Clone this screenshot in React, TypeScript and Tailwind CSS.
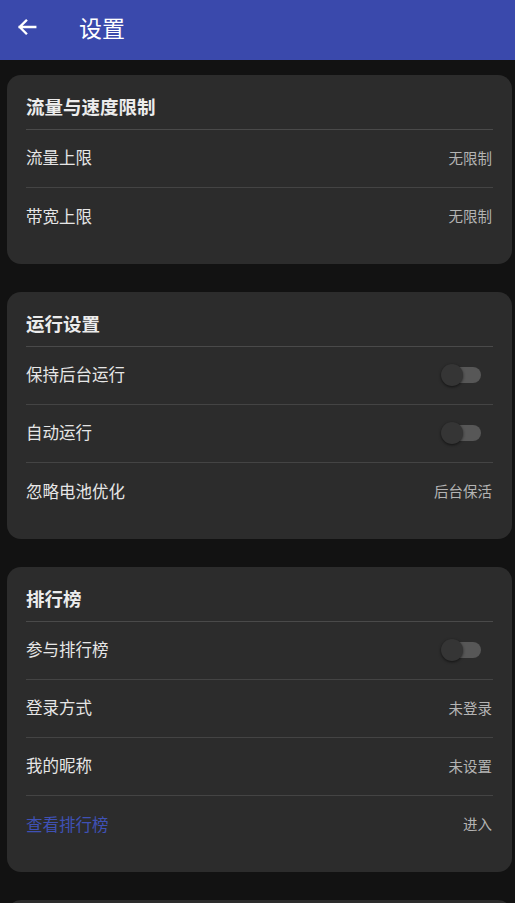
import React from 'react';

const font = { fontFamily: '"Noto Sans CJK SC", "Noto Sans", sans-serif' };

type Row = { label: string; value?: string; toggle?: boolean; link?: boolean };

const sections: { title: string; rows: Row[] }[] = [
  {
    title: '流量与速度限制',
    rows: [
      { label: '流量上限', value: '无限制' },
      { label: '带宽上限', value: '无限制' },
    ],
  },
  {
    title: '运行设置',
    rows: [
      { label: '保持后台运行', toggle: true },
      { label: '自动运行', toggle: true },
      { label: '忽略电池优化', value: '后台保活' },
    ],
  },
  {
    title: '排行榜',
    rows: [
      { label: '参与排行榜', toggle: true },
      { label: '登录方式', value: '未登录' },
      { label: '我的昵称', value: '未设置' },
      { label: '查看排行榜', value: '进入', link: true },
    ],
  },
];

function Toggle() {
  return (
    <div className="relative w-[40px] h-[22px] mr-[12px] flex items-center">
      <div className="absolute right-0 w-[30px] h-[16px] rounded-full bg-[#575757]" />
      <div className="absolute left-0 w-[22px] h-[22px] rounded-full bg-[#353535] shadow-[0_1px_3px_rgba(0,0,0,0.6)]" />
    </div>
  );
}

export default function App() {
  return (
    <div className="w-[515px] h-[903px] overflow-hidden bg-[#121212]" style={font}>
      {/* App bar */}
      <div className="h-[60px] bg-[#3a49ac] flex items-center pb-[6px]">
        <svg width="22" height="22" viewBox="0 0 24 24" className="ml-[16px]" fill="none" stroke="#fff" strokeWidth="2.6" strokeLinecap="square">
          <path d="M21 12H4M11 5l-7 7 7 7" />
        </svg>
        <span className="ml-[41px] text-[23px] text-white">设置</span>
      </div>

      <div className="pl-[7px] pr-[3px] pt-[15px] flex flex-col gap-[28px]">
        {sections.map((s) => (
          <div key={s.title} className="bg-[#2c2c2c] rounded-[14px] pl-[19px] pr-[19px] pt-[16px] pb-[18px]">
            <div className="h-[39px] flex items-center text-[18.5px] font-bold text-[#ececec] border-b border-[#4a4a4a] pb-[7px]">
              {s.title}
            </div>
            {s.rows.map((r, i) => (
              <div
                key={r.label}
                className={`h-[58px] flex items-center justify-between pb-[2px] ${i < s.rows.length - 1 ? 'border-b border-[#444444]' : ''}`}
              >
                <span className={`text-[16.5px] ${r.link ? 'text-[#3f51b5]' : 'text-[#e6e6e6]'}`}>{r.label}</span>
                {r.toggle ? <Toggle /> : <span className="text-[14.5px] text-[#b4b4b4] mr-[1px]">{r.value}</span>}
              </div>
            ))}
          </div>
        ))}
        <div className="bg-[#2c2c2c] rounded-[14px] h-[60px]" />
      </div>
    </div>
  );
}
